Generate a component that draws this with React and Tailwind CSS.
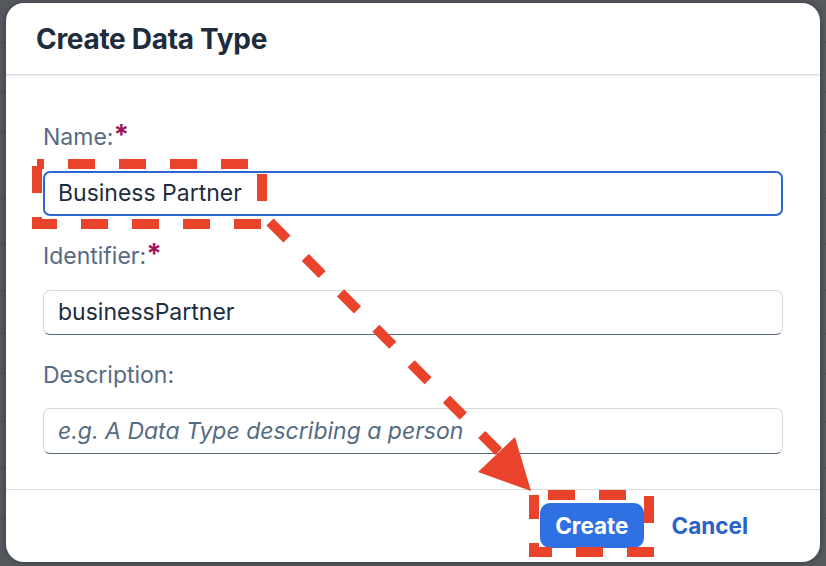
import React from 'react';

const font = { fontFamily: 'Inter, "Noto Sans", sans-serif' };

const bgRows = [42, 92, 131, 198, 244, 290, 333, 373, 421, 468, 518];

function Background() {
  return (
    <div className="flex flex-col">
      {bgRows.map((y) => (
        <div key={y} className="h-0 relative">
          <div className="absolute left-0 right-0 border-t border-[#4b4f54]" style={{ top: y }} />
        </div>
      ))}
    </div>
  );
}

function Label({ text, required }) {
  return (
    <div className="h-7 flex items-center text-[23px] text-[#556b82] leading-none">
      <span>{text}</span>
      {required && <span className="text-[#a1125f] font-bold text-[28px] -mt-[4px]">*</span>}
    </div>
  );
}

function Annotations() {
  const red = '#e9432b';
  return (
    <svg className="absolute inset-0 pointer-events-none" width="826" height="566" viewBox="0 0 826 566">
      <rect x="37" y="164" width="225" height="60" fill="none" stroke={red} strokeWidth="10" strokeDasharray="27 24" strokeDashoffset="20" />
      <line x1="270" y1="222" x2="512" y2="465" stroke={red} strokeWidth="10" strokeDasharray="24 26" />
      <polygon points="515,437 478,472 531,491" fill={red} />
      <rect x="534" y="495" width="115" height="57" fill="none" stroke={red} strokeWidth="10" strokeDasharray="27 24" strokeDashoffset="-14" />
    </svg>
  );
}

export default function App() {
  return (
    <div className="relative w-[826px] h-[566px] overflow-hidden bg-[#55595e]" style={font}>
      <Background />
      <div className="absolute left-[6px] top-[3px] w-[814px] h-[559px] bg-white rounded-[18px] shadow-[0_0_6px_rgba(0,0,0,0.35)] flex flex-col overflow-hidden">
        <div className="h-[72px] shrink-0 flex items-center px-[30px] border-b border-[#d9dcdf] shadow-[0_1px_2px_rgba(0,0,0,0.08)]">
          <h1 className="text-[28px] font-bold text-[#1d2d3e] tracking-[-0.3px]">Create Data Type</h1>
        </div>
        <div className="flex flex-col px-[37px] pt-[48px]">
          <Label text="Name:" required />
          <div className="mt-[20px] h-[45px] rounded-[7px] border-2 border-[#2e67d3] flex items-center px-[13px] text-[23px] text-[#1d2d3e]">
            Business Partner
          </div>
          <div className="mt-[26px]"><Label text="Identifier:" required /></div>
          <div className="mt-[20px] h-[45px] rounded-[7px] border border-[#d5dadd] border-b-[#5b6b7e] flex items-center px-[14px] text-[23px] text-[#1d2d3e]">
            businessPartner
          </div>
          <div className="mt-[26px]"><Label text="Description:" /></div>
          <div className="mt-[19px] h-[46px] rounded-[7px] border border-[#d5dadd] border-b-[#5b6b7e] flex items-center px-[14px] text-[23px] italic text-[#556b82]">
            e.g. A Data Type describing a person
          </div>
        </div>
        <div className="mt-[35px] border-t border-[#d9dcdf] flex justify-end items-center pt-[13px] pr-[59px] gap-[15px]">
          <button className="h-[45px] px-[15px] rounded-[10px] bg-[#2f70e3] text-white text-[22.5px] font-bold">Create</button>
          <button className="h-[45px] px-[13px] text-[22.5px] font-bold text-[#2a62c9]">Cancel</button>
        </div>
      </div>
      <Annotations />
    </div>
  );
}
